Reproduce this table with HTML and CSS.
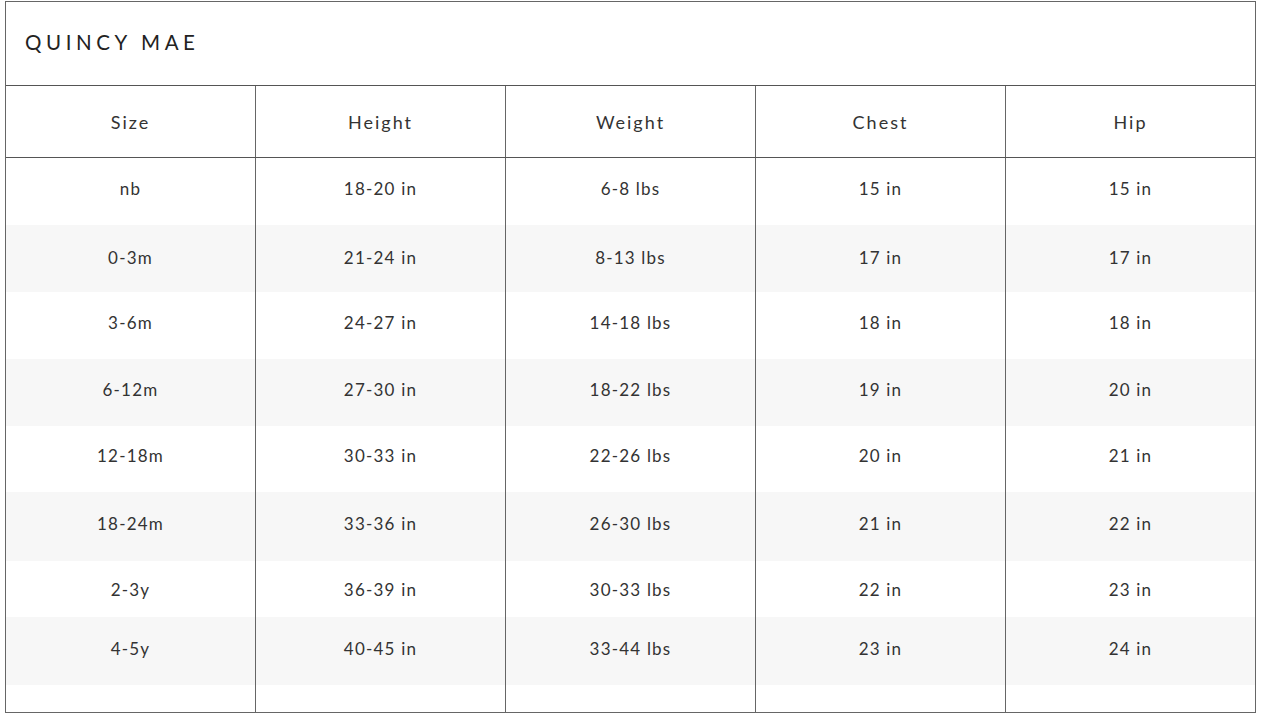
FILE: index.html
```html
<!DOCTYPE html>
<html lang="en">
<head>
<meta charset="utf-8">
<title>Quincy Mae Size Chart</title>
<link rel="stylesheet" href="styles.css">
</head>
<body>
<div class="chart">
  <div class="brand">QUINCY MAE</div>
  <div class="table">
    <div class="row head">
      <div class="cell">Size</div><div class="cell">Height</div><div class="cell">Weight</div><div class="cell">Chest</div><div class="cell">Hip</div>
    </div>
    <div class="row r67">
      <div class="cell">nb</div><div class="cell">18-20 in</div><div class="cell">6-8 lbs</div><div class="cell">15 in</div><div class="cell">15 in</div>
    </div>
    <div class="row r67b alt">
      <div class="cell">0-3m</div><div class="cell">21-24 in</div><div class="cell">8-13 lbs</div><div class="cell">17 in</div><div class="cell">17 in</div>
    </div>
    <div class="row r67">
      <div class="cell">3-6m</div><div class="cell">24-27 in</div><div class="cell">14-18 lbs</div><div class="cell">18 in</div><div class="cell">18 in</div>
    </div>
    <div class="row r67 alt">
      <div class="cell">6-12m</div><div class="cell">27-30 in</div><div class="cell">18-22 lbs</div><div class="cell">19 in</div><div class="cell">20 in</div>
    </div>
    <div class="row r66">
      <div class="cell">12-18m</div><div class="cell">30-33 in</div><div class="cell">22-26 lbs</div><div class="cell">20 in</div><div class="cell">21 in</div>
    </div>
    <div class="row r69 alt">
      <div class="cell">18-24m</div><div class="cell">33-36 in</div><div class="cell">26-30 lbs</div><div class="cell">21 in</div><div class="cell">22 in</div>
    </div>
    <div class="row r56">
      <div class="cell">2-3y</div><div class="cell">36-39 in</div><div class="cell">30-33 lbs</div><div class="cell">22 in</div><div class="cell">23 in</div>
    </div>
    <div class="row r68 alt">
      <div class="cell">4-5y</div><div class="cell">40-45 in</div><div class="cell">33-44 lbs</div><div class="cell">23 in</div><div class="cell">24 in</div>
    </div>
    <div class="row r27">
      <div class="cell"></div><div class="cell"></div><div class="cell"></div><div class="cell"></div><div class="cell"></div>
    </div>
  </div>
</div>
</body>
</html>
```
FILE: styles.css
```css
html, body {
  margin: 0;
  padding: 0;
  background: #ffffff;
}
body {
  font-family: Lato, "Open Sans", sans-serif;
  color: #333333;
}
.chart {
  margin: 1px 0 0 5px;
  width: 1251px;
  border: 1px solid #666666;
  box-sizing: border-box;
}
.brand {
  height: 79px;
  border-bottom: 1px solid #555555;
  display: flex;
  align-items: center;
  padding-left: 19px;
  padding-bottom: 4px;
  font-size: 20.5px;
  letter-spacing: 4.6px;
  color: #222222;
  box-sizing: content-box;
}
.table {
  display: flex;
  flex-direction: column;
}
.row {
  display: grid;
  grid-template-columns: 250px 250px 250px 250px 249px;
}
.cell {
  border-right: 1px solid #666666;
  display: flex;
  align-items: center;
  justify-content: center;
  font-size: 17px;
  letter-spacing: 1.2px;
  padding-bottom: 7px;
}
.cell:last-child {
  border-right: none;
}
.head {
  height: 71px;
  border-bottom: 1px solid #555555;
}
.head .cell {
  font-size: 18px;
  letter-spacing: 2px;
  padding-top: 0;
  padding-bottom: 0;
}
.alt {
  background: #f7f7f7;
}
.r67 { height: 67px; }
.r67b { height: 67px; }
.r67b .cell { padding-bottom: 3px; }
.r66 { height: 66px; }
.r69 { height: 69px; }
.r56 { height: 56px; }
.r56 .cell { padding-bottom: 0; }
.r68 { height: 68px; }
.r68 .cell { padding-bottom: 5px; }
.r27 { height: 27px; }
```
